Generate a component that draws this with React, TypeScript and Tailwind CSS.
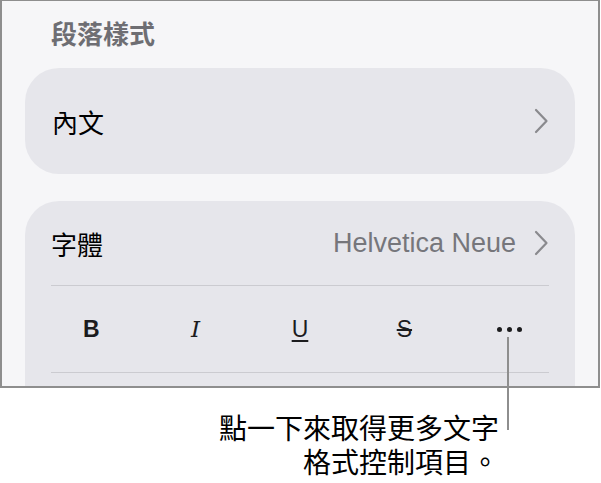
import React from 'react';

const cjk = { fontFamily: '"Noto Sans CJK TC", "Noto Sans", sans-serif' };
const latin = { fontFamily: '"Liberation Sans", "Noto Sans CJK TC", sans-serif' };

const Chevron: React.FC = () => (
  <svg width="16" height="26" viewBox="0 0 16 26" fill="none" className="shrink-0">
    <path d="M3 2 L13.5 13 L3 24" stroke="#8a8a8e" strokeWidth="2.2" strokeLinecap="round" strokeLinejoin="round" />
  </svg>
);

const App: React.FC = () => {
  return (
    <div className="relative w-[601px] h-[483px] bg-white overflow-hidden">
      {/* screenshot frame */}
      <div className="w-[600px] h-[388px] border-2 border-t border-[#8e8e8e] bg-[#f6f6f8] overflow-hidden">
        <div className="pt-[16px] px-[23px]">
          <div className="pl-[26px] h-[32px] leading-[32px] text-[26px] font-semibold text-[#6e6e73]" style={cjk}>
            段落樣式
          </div>

          <div className="mt-[19px] h-[106px] rounded-[34px] bg-[#e6e6eb] flex items-center justify-between pl-[27px] pr-[26px]">
            <span className="text-[26px] text-black" style={cjk}>內文</span>
            <Chevron />
          </div>

          <div className="mt-[27px] h-[300px] rounded-t-[34px] bg-[#e6e6eb]">
            <div className="h-[84px] flex items-center justify-between pl-[26px] pr-[26px]">
              <span className="text-[26px] text-black" style={cjk}>字體</span>
              <div className="flex items-center gap-[17px]">
                <span className="text-[27px] text-[#76767b]" style={latin}>Helvetica Neue</span>
                <Chevron />
              </div>
            </div>
            <div className="mx-[26px] h-px bg-[#cbcbd0]" />
            <div className="h-[86px] grid grid-cols-5 items-center px-[14px] text-[#1c1c1e]">
              <div className="flex justify-center">
                <span className="text-[23px] font-bold" style={latin}>B</span>
              </div>
              <div className="flex justify-center">
                <span className="text-[23px] italic" style={{ fontFamily: '"DejaVu Serif", serif' }}>I</span>
              </div>
              <div className="flex justify-center">
                <span className="text-[23px] underline underline-offset-[3px] decoration-2" style={latin}>U</span>
              </div>
              <div className="flex justify-center">
                <span className="text-[23px] line-through decoration-2" style={latin}>S</span>
              </div>
              <div className="flex justify-center gap-[5px] pl-[1px]">
                <span className="w-[5px] h-[5px] rounded-full bg-[#1c1c1e]" />
                <span className="w-[5px] h-[5px] rounded-full bg-[#1c1c1e]" />
                <span className="w-[5px] h-[5px] rounded-full bg-[#1c1c1e]" />
              </div>
            </div>
            <div className="mx-[26px] h-px bg-[#cbcbd0]" />
          </div>
        </div>
      </div>

      {/* callout */}
      <div className="absolute left-[507px] top-[337px] w-[2px] h-[93px] bg-[#8e8e8e]" />
      <div className="mt-[22px] pr-[102px] text-right text-[28px] leading-[34px] text-black" style={cjk}>
        <div>點一下來取得更多文字</div>
        <div>格式控制項目。</div>
      </div>
    </div>
  );
};

export default App;
